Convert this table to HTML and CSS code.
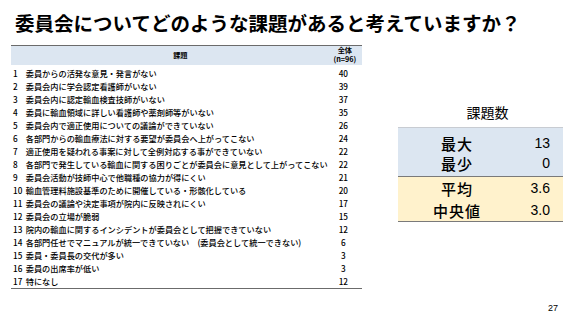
FILE: index.html
```html
<!DOCTYPE html>
<html lang="ja">
<head>
<meta charset="utf-8">
<link rel="stylesheet" href="styles.css">
</head>
<body>
<div class="slide">
  <h1 class="title">委員会についてどのような課題があると考えていますか？</h1>
  <div class="content">
    <table class="issues">
      <thead>
        <tr><th class="h-issue" colspan="2">課題</th><th class="h-total"><span class="hl">全体</span><span class="hl">(n=96)</span></th></tr>
      </thead>
      <tbody>
        <tr><td class="no">1</td><td class="txt">委員からの活発な意見・発言がない</td><td class="val">40</td></tr>
        <tr><td class="no">2</td><td class="txt">委員会内に学会認定看護師がいない</td><td class="val">39</td></tr>
        <tr><td class="no">3</td><td class="txt">委員会内に認定輸血検査技師がいない</td><td class="val">37</td></tr>
        <tr><td class="no">4</td><td class="txt">委員に輸血領域に詳しい看護師や薬剤師等がいない</td><td class="val">35</td></tr>
        <tr><td class="no">5</td><td class="txt">委員会内で適正使用についての議論ができていない</td><td class="val">26</td></tr>
        <tr><td class="no">6</td><td class="txt">各部門からの輸血療法に対する要望が委員会へ上がってこない</td><td class="val">24</td></tr>
        <tr><td class="no">7</td><td class="txt">適正使用を疑われる事案に対して全例対応する事ができていない</td><td class="val">22</td></tr>
        <tr><td class="no">8</td><td class="txt">各部門で発生している輸血に関する困りごとが委員会に意見として上がってこない</td><td class="val">22</td></tr>
        <tr><td class="no">9</td><td class="txt">委員会活動が技師中心で他職種の協力が得にくい</td><td class="val">21</td></tr>
        <tr><td class="no">10</td><td class="txt">輸血管理料施設基準のために開催している・形骸化している</td><td class="val">20</td></tr>
        <tr><td class="no">11</td><td class="txt">委員会の議論や決定事項が院内に反映されにくい</td><td class="val">17</td></tr>
        <tr><td class="no">12</td><td class="txt">委員会の立場が脆弱</td><td class="val">15</td></tr>
        <tr><td class="no">13</td><td class="txt">院内の輸血に関するインシデントが委員会として把握できていない</td><td class="val">12</td></tr>
        <tr><td class="no">14</td><td class="txt">各部門任せでマニュアルが統一できていない　(委員会として統一できない)</td><td class="val">6</td></tr>
        <tr><td class="no">15</td><td class="txt">委員・委員長の交代が多い</td><td class="val">3</td></tr>
        <tr><td class="no">16</td><td class="txt">委員の出席率が低い</td><td class="val">3</td></tr>
        <tr><td class="no">17</td><td class="txt">特になし</td><td class="val">12</td></tr>
      </tbody>
    </table>
    <div class="summary">
      <div class="summary-title">課題数</div>
      <div class="sum-box blue">
        <div class="sum-row"><span class="lbl">最大</span><span class="num">13</span></div>
        <div class="sum-row"><span class="lbl">最少</span><span class="num">0</span></div>
      </div>
      <div class="sum-box yellow">
        <div class="sum-row tall"><span class="lbl">平均</span><span class="num">3.6</span></div>
        <div class="sum-row tall"><span class="lbl">中央値</span><span class="num">3.0</span></div>
      </div>
    </div>
  </div>
  <div class="page-no">27</div>
</div>
</body>
</html>
```
FILE: styles.css
```css
* { box-sizing: border-box; }
html, body { margin: 0; padding: 0; background: #fff; }
body {
  width: 569px;
  height: 320px;
  overflow: hidden;
  font-family: "Noto Sans CJK JP", "Noto Sans", sans-serif;
  color: #000;
}
.slide {
  position: relative;
  width: 569px;
  height: 320px;
  display: flex;
  flex-direction: column;
}
.title {
  margin: 0;
  padding: 9px 0 0 15px;
  height: 45px;
  font-size: 19.5px;
  font-weight: bold;
  line-height: 28px;
  white-space: nowrap;
}
.content {
  display: flex;
  align-items: flex-start;
  padding-left: 11px;
}
.issues {
  width: 351px;
  border-collapse: collapse;
  font-size: 8.2px;
  border-top: 1.5px solid #6b6b6b;
  border-bottom: 1.5px solid #6b6b6b;
}
.issues thead tr {
  background: #dce6f1;
  height: 19px;
}
.issues th {
  font-weight: bold;
  font-size: 7.2px;
  padding: 0;
  vertical-align: middle;
}
.hl {
  display: block;
  line-height: 9px;
  height: 9px;
}
.h-issue { text-align: center; padding-left: 22px !important; line-height: 9px; }
.h-total { width: 42px; text-align: center; }
.issues tbody tr { height: 13px; }
.issues tbody tr:first-child td { padding-top: 2px; }
.issues td {
  padding: 0;
  line-height: 13px;
  white-space: nowrap;
  font-weight: 500;
}
.no { width: 17px; padding-left: 2px !important; }
.val { text-align: center; padding-right: 3px !important; }
.summary {
  margin-left: 36px;
  margin-top: 58px;
  width: 165px;
  display: flex;
  flex-direction: column;
}
.summary-title {
  text-align: center;
  padding-left: 14px;
  font-size: 14px;
  line-height: 18px;
  margin-bottom: 6px;
}
.sum-box {
  display: flex;
  flex-direction: column;
}
.blue { background: #dce6f1; border-top: 1px solid #c8ccd2; padding: 5px 0 3px; }
.yellow { background: #fff2cc; border-top: 1.5px solid #7a7a7a; border-bottom: 1.5px solid #7a7a7a; }
.sum-row {
  display: flex;
  height: 20px;
  align-items: center;
  font-size: 15px;
}
.sum-row.tall { height: 22px; }
.lbl {
  width: 118px;
  text-align: center;
  font-weight: 500;
  letter-spacing: 1px;
}
.num {
  width: 34px;
  text-align: right;
  font-family: "Liberation Sans", Arial, sans-serif;
  font-size: 14px;
}
.page-no {
  position: absolute;
  right: 11px;
  bottom: 7px;
  font-size: 9px;
  font-family: "Liberation Sans", Arial, sans-serif;
}
```
